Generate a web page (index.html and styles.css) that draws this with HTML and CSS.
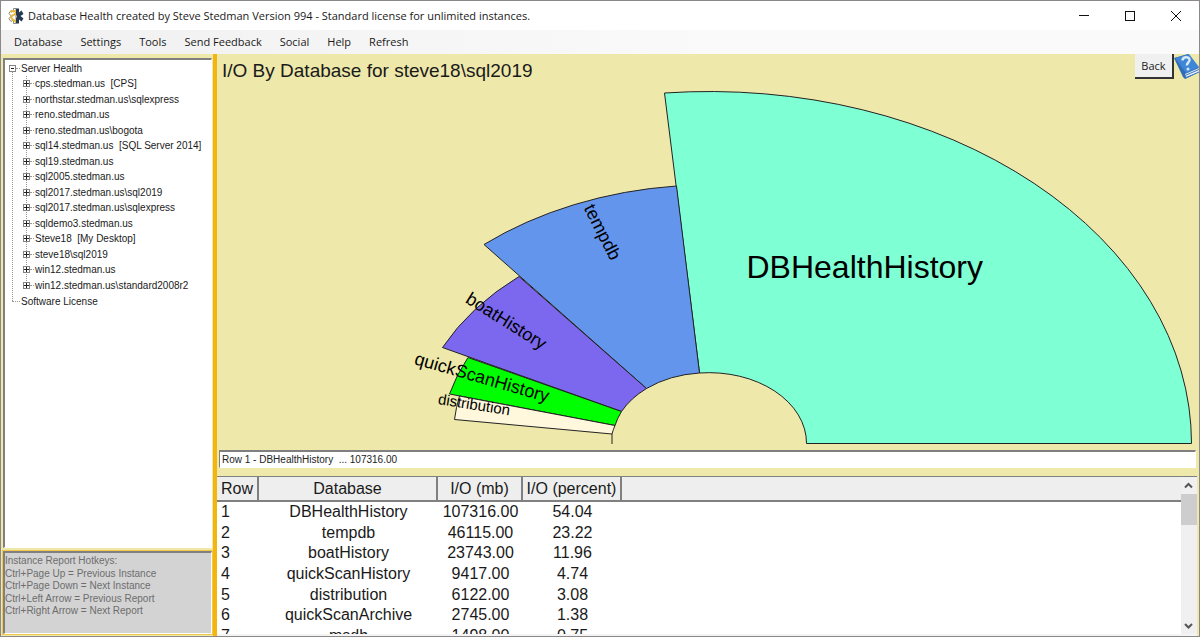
FILE: index.html
```html
<!DOCTYPE html>
<html lang="en">
<head>
<meta charset="utf-8">
<title>Database Health</title>
<link rel="stylesheet" href="styles.css">
</head>
<body>
<div class="window">
  <header class="titlebar">
    <svg class="app-icon" width="16" height="16" viewBox="0 0 16 16" aria-hidden="true">
      <path d="M8 .5v15H5.500V12L3 13.500.8 10.500 3.500 8 .8 5.500 3 2.500 5.500 4V.5z" fill="#fff" stroke="#8a8a80" stroke-width="1"/>
      <path d="M2.500 4C8 1.500 10 5.500 5.500 7S4 12 8 13.500" fill="none" stroke="#e6b93a" stroke-width="2"/>
      <path d="M8 .5h3v4l2.500-2L15.500 6 12.500 8l3 2.500-2 3-2.500-2v4H8v-5l1-2-1-2z" fill="#26384f"/>
    </svg>
    <span class="title-text">Database Health created by Steve Stedman Version 994 - Standard license for unlimited instances.</span>
    <div class="window-buttons">
      <button type="button" aria-label="Minimize"><svg width="12" height="12"><path d="M1 5.500h10" stroke="#111"/></svg></button>
      <button type="button" aria-label="Maximize"><svg width="12" height="12"><rect x="1.500" y="1.500" width="9" height="9" fill="none" stroke="#111"/></svg></button>
      <button type="button" aria-label="Close"><svg width="12" height="12"><path d="M1 1l10 10M11 1L1 11" stroke="#111"/></svg></button>
    </div>
  </header>
  <nav class="menubar">
    <button type="button">Database</button><button type="button">Settings</button><button type="button">Tools</button><button type="button">Send Feedback</button><button type="button">Social</button><button type="button">Help</button><button type="button">Refresh</button>
  </nav>
  <div class="workspace">
    <aside class="sidebar">
      <div class="tree">
        <ul class="tree-list">
          <li>
            <div class="node"><button type="button" class="toggle open" aria-label="Collapse"></button>Server Health</div>
            <ul class="servers">
              <li class="node"><button type="button" class="toggle" aria-label="Expand"></button>cps.stedman.us&nbsp; [CPS]</li>
              <li class="node"><button type="button" class="toggle" aria-label="Expand"></button>northstar.stedman.us\sqlexpress</li>
              <li class="node"><button type="button" class="toggle" aria-label="Expand"></button>reno.stedman.us</li>
              <li class="node"><button type="button" class="toggle" aria-label="Expand"></button>reno.stedman.us\bogota</li>
              <li class="node"><button type="button" class="toggle" aria-label="Expand"></button>sql14.stedman.us&nbsp; [SQL Server 2014]</li>
              <li class="node"><button type="button" class="toggle" aria-label="Expand"></button>sql19.stedman.us</li>
              <li class="node"><button type="button" class="toggle" aria-label="Expand"></button>sql2005.stedman.us</li>
              <li class="node"><button type="button" class="toggle" aria-label="Expand"></button>sql2017.stedman.us\sql2019</li>
              <li class="node"><button type="button" class="toggle" aria-label="Expand"></button>sql2017.stedman.us\sqlexpress</li>
              <li class="node"><button type="button" class="toggle" aria-label="Expand"></button>sqldemo3.stedman.us</li>
              <li class="node"><button type="button" class="toggle" aria-label="Expand"></button>Steve18&nbsp; [My Desktop]</li>
              <li class="node"><button type="button" class="toggle" aria-label="Expand"></button>steve18\sql2019</li>
              <li class="node"><button type="button" class="toggle" aria-label="Expand"></button>win12.stedman.us</li>
              <li class="node"><button type="button" class="toggle" aria-label="Expand"></button>win12.stedman.us\standard2008r2</li>
            </ul>
          </li>
          <li class="leaf">Software License</li>
        </ul>
      </div>
      <div class="hotkeys">
        <div class="hotkey-lines">
          <div>Instance Report Hotkeys:</div>
          <div>Ctrl+Page Up = Previous Instance</div>
          <div>Ctrl+Page Down = Next Instance</div>
          <div>Ctrl+Left Arrow = Previous Report</div>
          <div>Ctrl+Right Arrow = Next Report</div>
        </div>
      </div>
    </aside>
    <main class="report">
      <div class="report-head">
        <h1>I/O By Database for steve18\sql2019</h1>
        <button type="button" class="back">Back</button>
        <button type="button" class="help" aria-label="Help"><svg width="25" height="26" viewBox="0 0 25 26">
          <path d="M0 4L14 0l11 14v4l-14 7-2-2z" fill="#2f6db8"/>
          <path d="M11 20l14-6v4l-13 5z" fill="#e9eef3"/>
          <path d="M11 21.500l14-6M12 24l13-6" stroke="#3c7cc6" stroke-width="1" fill="none"/>
          <path d="M1 4l14-4 10 13-13 6z" fill="#3f86d6"/>
          <path d="M8.500 6.500c0-4 6-4.500 7-1 .6 3-3 3-2.500 6" fill="none" stroke="#d8e8f5" stroke-width="2.500"/>
          <circle cx="14" cy="15" r="1.500" fill="#d8e8f5"/>
        </svg></button>
      </div>
      <svg class="chart" viewBox="217 88 981 362" role="img" aria-label="I/O by database">
        <g stroke="#222" stroke-width="1">
          <path d="M664 93A482.500 352 0 0 1 1191 443.500H806A97.500 70.500 0 0 0 699 373Z" fill="#7fffd4"/>
          <path d="M483.500 244.500A353.500 258 0 0 1 676 186L699 373A97.500 70.500 0 0 0 646 388.500Z" fill="#6495ed"/>
          <path d="M442 347.500A297.500 217 0 0 1 518.500 276.500L646 388.500A97.500 70.500 0 0 0 621 411.500Z" fill="#7b68ee"/>
          <path d="M449 394A268 195.600 0 0 1 467.500 357.500L621 411.500A97.500 70.500 0 0 0 614.500 425.500Z" fill="#00ff00"/>
          <path d="M454 419.500A256 187 0 0 1 459 396L614.500 425.500A97.500 70.500 0 0 0 611.500 434Z" fill="#fff8dc"/>
          <path d="M611.500 434V444" fill="none"/>
        </g>
        <g class="slice-labels">
          <text x="746" y="278" font-size="32">DBHealthHistory</text>
          <text transform="translate(583 208) rotate(63)" font-size="18">tempdb</text>
          <text transform="translate(464 302) rotate(32)" font-size="18">boatHistory</text>
          <text transform="translate(413 364) rotate(16)" font-size="18">quickScanHistory</text>
          <text transform="translate(437 404) rotate(9)" font-size="15">distribution</text>
        </g>
      </svg>
      <input class="status" type="text" readonly aria-label="Selected row" value="Row 1 - DBHealthHistory  ... 107316.00">
      <div class="grid">
        <div class="grid-body">
          <table>
            <colgroup><col class="c-row"><col class="c-db"><col class="c-io"><col class="c-pct"><col></colgroup>
            <thead><tr><th>Row</th><th>Database</th><th>I/O (mb)</th><th>I/O (percent)</th><th></th></tr></thead>
            <tbody>
              <tr><td>1</td><td>DBHealthHistory</td><td>107316.00</td><td>54.04</td><td></td></tr>
              <tr><td>2</td><td>tempdb</td><td>46115.00</td><td>23.22</td><td></td></tr>
              <tr><td>3</td><td>boatHistory</td><td>23743.00</td><td>11.96</td><td></td></tr>
              <tr><td>4</td><td>quickScanHistory</td><td>9417.00</td><td>4.74</td><td></td></tr>
              <tr><td>5</td><td>distribution</td><td>6122.00</td><td>3.08</td><td></td></tr>
              <tr><td>6</td><td>quickScanArchive</td><td>2745.00</td><td>1.38</td><td></td></tr>
              <tr><td>7</td><td>msdb</td><td>1498.00</td><td>0.75</td><td></td></tr>
            </tbody>
          </table>
        </div>
        <div class="scrollbar">
          <svg width="16" height="17"><path d="M4 10.500L7.500 7l3.500 3.500" fill="none" stroke="#555" stroke-width="2"/></svg>
          <div class="thumb"></div>
          <svg width="16" height="17"><path d="M4 7l3.500 3.500L11 7" fill="none" stroke="#555" stroke-width="2"/></svg>
        </div>
      </div>
    </main>
  </div>
</div>
</body>
</html>
```

FILE: styles.css
```css
* { box-sizing: border-box; }
html, body { margin: 0; height: 100%; }
body { font-family: "Liberation Sans", Arial, sans-serif; color: #1a1a1a; }
button { border: 0; background: none; padding: 0; font: inherit; color: inherit; }
svg { display: block; }
ul { list-style: none; margin: 0; padding: 0; }

.window {
  display: flex;
  flex-direction: column;
  height: 100vh;
  overflow: hidden;
  border: 1px solid #8c8888;
  background: #eee8aa;
}
.titlebar {
  display: flex;
  align-items: center;
  flex: none;
  height: 29px;
  padding-left: 7px;
  background: #fff;
  font: 11px "Open Sans", sans-serif;
}
.title-text { flex: 1; margin-left: 4px; white-space: nowrap; }
.window-buttons { display: flex; }
.window-buttons button { display: grid; place-items: center; width: 46px; height: 29px; }
.menubar {
  display: flex;
  align-items: center;
  flex: none;
  gap: 18px;
  height: 24px;
  padding: 0 0 2px 13px;
  background: linear-gradient(90deg, #f0f0f0, #fafafa 60%);
  font: 11px "Open Sans", sans-serif;
}
.workspace { display: flex; flex: 1; min-height: 0; }

.sidebar {
  display: flex;
  flex-direction: column;
  gap: 3px;
  flex: none;
  width: 216px;
  padding: 4px 1px 2px 2px;
  border-right: 4px solid #f5b50f;
  font-size: 10px;
}
.tree {
  flex: 1;
  min-height: 0;
  padding-left: 4px;
  border: 1px solid #fff;
  border-top: 2px solid #808080;
  border-left: 2px solid #808080;
  background: #fff;
  line-height: 15px;
  white-space: nowrap;
}
.tree-list, .servers {
  --dots: repeating-linear-gradient(#999 0 1px, transparent 1px 2px);
  background: var(--dots) no-repeat;
}
.tree-list { background-position: 3px 8px; background-size: 1px calc(100% - 16px); }
.servers {
  display: grid;
  grid-auto-rows: 1fr;
  height: 217px;
  padding-left: 14px;
  background-position: 17px 0;
  background-size: 1px calc(100% - 8px);
}
.node, .leaf { display: flex; align-items: center; }
.tree-list > li > .node, .leaf { height: 16px; }
.toggle {
  flex: none;
  order: -1;
  width: 7px;
  height: 7px;
  border: 1px solid #848484;
  background:
    linear-gradient(#222, #222) center / 5px 1px no-repeat,
    linear-gradient(#222, #222) center / 1px 5px no-repeat,
    #fff;
}
.toggle.open { background: linear-gradient(#222, #222) center / 3px 1px no-repeat, #fff; }
.node::before, .leaf::before {
  content: "";
  width: 4px;
  margin-right: 1px;
  border-top: 1px dotted #999;
}
.leaf::before { width: 8px; margin-left: 3px; }
.hotkeys {
  flex: none;
  height: 83px;
  padding-top: 2px;
  border: 1px solid #fff;
  border-top: 2px solid #808080;
  border-left: 2px solid #808080;
  background: #d3d3d3;
  box-shadow: 0 0 0 1px #f3c84a;
  color: #6d6d6d;
  line-height: 12px;
}
.hotkey-lines { display: grid; grid-auto-rows: 1fr; height: 63px; }

.report { display: flex; flex-direction: column; flex: 1; min-width: 0; }
.report-head { display: flex; align-items: flex-start; flex: none; height: 34px; padding-left: 5px; }
.report-head h1 { flex: 1; margin: 6px 0 0; font-size: 19px; font-weight: 400; line-height: 22px; }
.back {
  width: 39px;
  height: 25px;
  border: solid #333;
  border-width: 0 2px 2px 0;
  background: #f0f0f0;
  font: 11px "Open Sans", sans-serif;
}
.chart { flex: 1; width: 100%; min-height: 0; }
.status {
  flex: none;
  height: 18px;
  margin: 0 3px 8px 2px;
  padding: 0 2px;
  border: 1px solid #fff;
  border-top: 2px solid #808080;
  border-left: 1px solid #808080;
  background: #fff;
  color: #222;
  font: 10px "Liberation Sans", Arial, sans-serif;
}
.grid {
  display: flex;
  flex: none;
  height: 160px;
  margin-right: 2px;
  border-top: 1px solid #808080;
  border-bottom: 2px solid #f4f4f4;
  background: #fff;
}
.grid-body { flex: 1; overflow: hidden; }
table { width: 100%; height: 169px; border-collapse: separate; border-spacing: 0; table-layout: fixed; font-size: 16px; }
.c-row { width: 42px; }
.c-db { width: 179px; }
.c-io { width: 85px; }
.c-pct { width: 99px; }
th {
  height: 25px;
  padding: 0;
  border-right: 2px solid #808080;
  border-bottom: 2px solid #808080;
  background: #eee;
  font-weight: 400;
  white-space: nowrap;
}
th:last-child { border-right: 0; }
td { padding: 0; text-align: center; line-height: 20px; }
td:first-child { padding-left: 4px; text-align: left; }
.scrollbar { display: flex; flex-direction: column; flex: none; width: 16px; background: #f0f0f0; }
.thumb { height: 31px; background: #cdcdcd; }
.scrollbar svg:last-child { margin-top: auto; }
```
